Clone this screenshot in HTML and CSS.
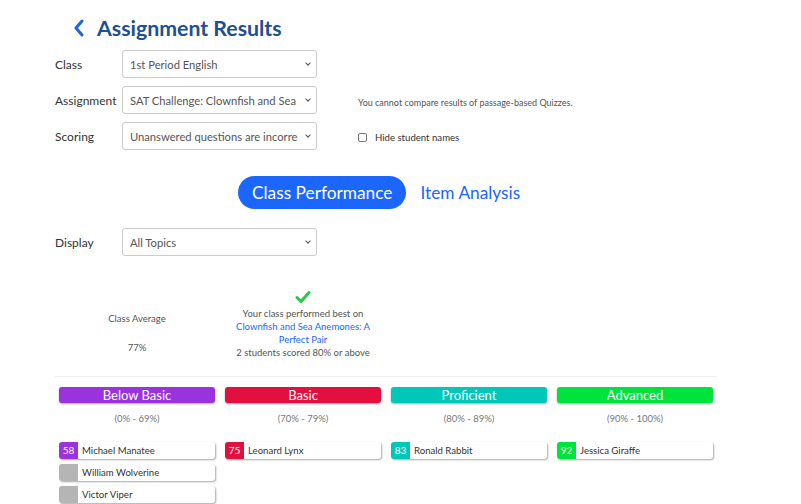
FILE: index.html
```html
<!DOCTYPE html>
<html lang="en">
<head>
    <meta charset="UTF-8">
    <meta name="viewport" content="width=device-width, initial-scale=1.0">
    <title>Assignment Results</title>
    <link rel="stylesheet" href="styles.css">
</head>
<body>

    <h1 class="title">
        <svg class="back" width="12" height="18" viewBox="0 0 12 18">
            <path d="M9 2 L3 9 L9 16" fill="none" stroke="#1a66e6" stroke-width="3" stroke-linecap="round" stroke-linejoin="round"/>
        </svg>
        Assignment Results
    </h1>

    <!-- filter form -->
    <div class="form">
        <label class="label">Class</label>
        <div class="select"><span>1st Period English</span><i class="caret"></i></div>
        <div></div>

        <label class="label">Assignment</label>
        <div class="select"><span>SAT Challenge: Clownfish and Sea Anemones</span><i class="caret"></i></div>
        <div class="note">You cannot compare results of passage-based Quizzes.</div>

        <label class="label">Scoring</label>
        <div class="select"><span>Unanswered questions are incorrect</span><i class="caret"></i></div>
        <div class="check"><span class="box"></span>Hide student names</div>
    </div>

    <div class="tabs">
        <span class="tab active">Class Performance</span>
        <span class="tab">Item Analysis</span>
    </div>

    <div class="form display">
        <label class="label">Display</label>
        <div class="select"><span>All Topics</span><i class="caret"></i></div>
    </div>

    <div class="results">
        <div class="stats">
            <div class="stat">
                <div>Class Average</div>
                <div class="avg">77%</div>
            </div>
            <div class="stat best">
                <svg class="tick" width="16" height="14" viewBox="0 0 16 14">
                    <path d="M2 7.5 L6 11.5 L14 2.5" fill="none" stroke="#22c94a" stroke-width="3" stroke-linecap="round" stroke-linejoin="round"/>
                </svg>
                <div>Your class performed best on</div>
                <a class="link">Clownfish and Sea Anemones: A Perfect Pair</a>
                <div>2 students scored 80% or above</div>
            </div>
        </div>

        <div class="levels">
            <div class="level">
                <div class="head below">Below Basic</div>
                <div class="range">(0% - 69%)</div>
                <div class="card"><span class="score below">58</span>Michael Manatee</div>
                <div class="card"><span class="score none"></span>William Wolverine</div>
                <div class="card"><span class="score none"></span>Victor Viper</div>
            </div>
            <div class="level">
                <div class="head basic">Basic</div>
                <div class="range">(70% - 79%)</div>
                <div class="card"><span class="score basic">75</span>Leonard Lynx</div>
            </div>
            <div class="level">
                <div class="head proficient">Proficient</div>
                <div class="range">(80% - 89%)</div>
                <div class="card"><span class="score proficient">83</span>Ronald Rabbit</div>
            </div>
            <div class="level">
                <div class="head advanced">Advanced</div>
                <div class="range">(90% - 100%)</div>
                <div class="card"><span class="score advanced">92</span>Jessica Giraffe</div>
            </div>
        </div>
    </div>

</body>
</html>
```

FILE: styles.css
```css
body {
    margin: 0;
    font-family: Lato, "Open Sans", sans-serif;
    color: #333;
    background: #fff;
}

.title {
    display: flex;
    align-items: center;
    gap: 12px;
    margin: 0;
    padding: 14px 0 0 73px;
    height: 28px;
    font-size: 21.3px;
    font-weight: 700;
    color: #1d4f91;
}

.form {
    display: grid;
    grid-template-columns: 67px 195px auto;
    row-gap: 8px;
    align-items: center;
    padding: 8px 0 0 55px;
}

.label {
    font-size: 12px;
    color: #333;
}

.select {
    position: relative;
    height: 26px;
    border: 1px solid #ccc;
    border-radius: 3px;
    display: flex;
    align-items: center;
    padding: 0 18px 0 7px;
    font-size: 11.2px;
    color: #555;
    overflow: hidden;
    white-space: nowrap;
}

.select span {
    overflow: hidden;
}

.caret {
    position: absolute;
    right: 6px;
    top: 10px;
    width: 3px;
    height: 3px;
    border-right: 1.3px solid #555;
    border-bottom: 1.3px solid #555;
    transform: rotate(45deg);
}

.note {
    margin-left: 41px;
    font-size: 9px;
    color: #555;
    padding-top: 4px;
}

.check {
    margin-left: 41px;
    display: flex;
    align-items: center;
    gap: 8px;
    font-size: 9.6px;
    color: #333;
    padding-top: 2px;
}

.box {
    width: 7px;
    height: 7px;
    border: 1px solid #777;
    border-radius: 2px;
}

.tabs {
    display: flex;
    align-items: center;
    gap: 14px;
    padding: 26px 0 0 238px;
}

.tab {
    font-size: 17.3px;
    color: #1a66ff;
}

.tab.active {
    background: #1a66ff;
    color: #fff;
    border-radius: 17px;
    padding: 6px 14px;
    height: 21px;
    line-height: 21px;
}

.display {
    padding-top: 19px;
}

.results {
    margin: 34px 84px 0 55px;
}

.stats {
    display: grid;
    grid-template-columns: repeat(4, 156px);
    column-gap: 10px;
    padding: 0 4px 17px;
    border-bottom: 1px solid #eee;
}

.stat {
    text-align: center;
    font-size: 9.5px;
    color: #555;
    line-height: 13px;
}

.stat:first-child {
    padding-top: 22px;
}

.avg {
    margin-top: 16px;
}

.tick {
    display: block;
    margin: 0 auto 3px;
}

.link {
    display: block;
    color: #1a66ff;
}

.levels {
    display: grid;
    grid-template-columns: repeat(4, 156px);
    column-gap: 10px;
    padding: 10px 4px 0;
}

.head {
    height: 16px;
    line-height: 16px;
    border-radius: 3px;
    text-align: center;
    color: #fff;
    font-size: 13px;
    box-shadow: 0 1px 2px rgba(0, 0, 0, 0.35);
}

.range {
    text-align: center;
    font-size: 9.5px;
    color: #777;
    margin: 10px 0 18px;
}

.card {
    display: flex;
    align-items: center;
    height: 17px;
    margin-bottom: 5px;
    border-radius: 3px;
    background: #fff;
    box-shadow: 1px 1px 2px rgba(0, 0, 0, 0.35);
    font-size: 9.6px;
    color: #333;
    overflow: hidden;
}

.score {
    width: 19px;
    height: 17px;
    line-height: 17px;
    text-align: center;
    color: #fff;
    font-size: 10px;
    margin-right: 4px;
}

.below { background: #9a33de; }
.basic { background: #e3103f; }
.proficient { background: #00c7b7; }
.advanced { background: #00e33c; }
.none { background: #b5b5b5; }
```
